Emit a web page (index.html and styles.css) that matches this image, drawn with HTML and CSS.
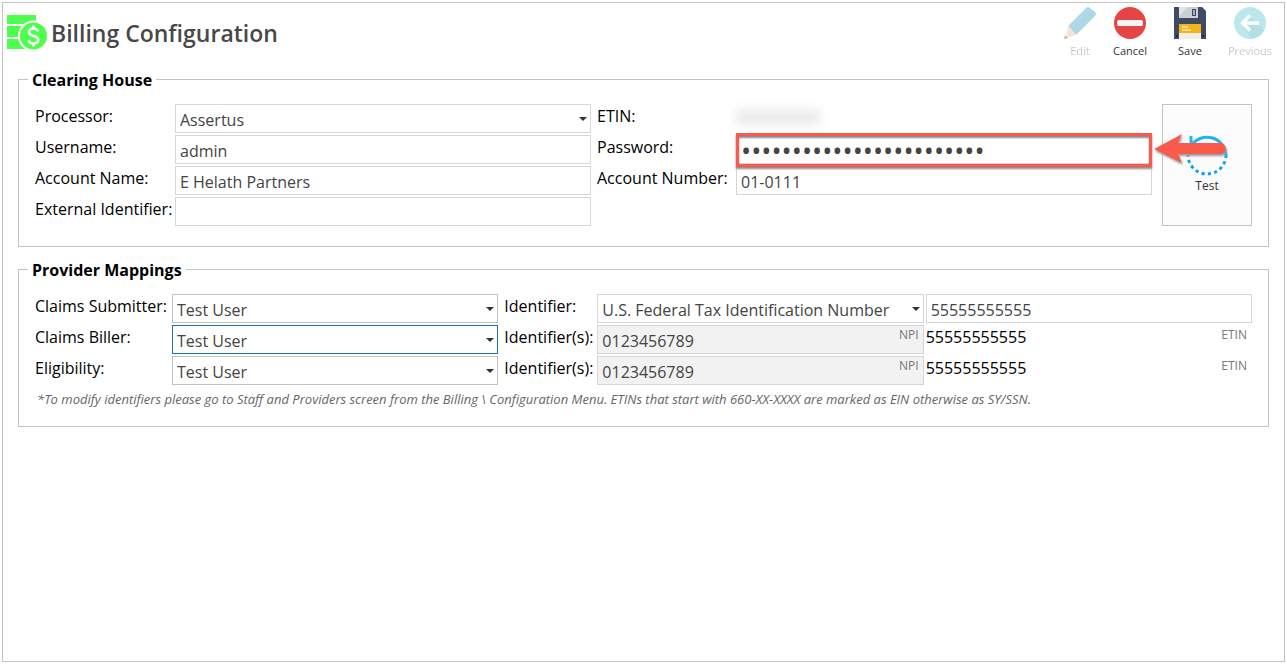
FILE: index.html
```html
<!DOCTYPE html>
<html lang="en">
  <head>
    <meta charset="UTF-8" />
    <meta name="viewport" content="width=device-width, initial-scale=1.0" />
    <title>Billing Configuration</title>
    <link rel="stylesheet" href="styles.css">
  </head>
  <body>
    <main class="window">
      <header class="header">
        <svg class="logo" width="41" height="36" viewBox="0 0 41 36">
          <g fill="#4cff4c">
            <rect x="0" y="0" width="29" height="9" />
            <rect x="0" y="11" width="29" height="11" />
            <rect x="0" y="24" width="29" height="10" />
          </g>
          <circle cx="26.5" cy="21" r="15.500" fill="#fff" />
          <circle cx="26.5" cy="21" r="13.500" fill="#4cff4c" />
          <path d="M31 16.5c-.6-2-2.300-3-4.500-3-2.700 0-4.500 1.400-4.500 3.600 0 5 9.300 2.600 9.300 7.700 0 2.300-2 3.700-4.800 3.700-2.500 0-4.400-1.200-4.900-3.300M26.500 10.500v3M26.500 28.500v3" fill="none" stroke="#fff" stroke-width="2.600" />
        </svg>
        <h1>Billing Configuration</h1>
        <div class="toolbar">
          <button class="tool tool-edit" type="button" disabled>
            <svg width="32" height="32" viewBox="0 0 32 32">
              <path d="M4 19 22 1q2-2 4 0l5 4q2 2 0 4L12 28z" fill="#3fa3c8" />
              <path d="M8 22 27 3l4 3q1 2-1 4L12 28z" fill="#2f8fb8" opacity=".4" />
              <path d="M4 19l2 3 2 1 1 2 3 3-10 3z" fill="#f3b3a0" />
              <path d="M1 28 0 32l4-1z" fill="#555" />
            </svg>
            Edit
          </button>
          <button class="tool" type="button">
            <svg width="32" height="32" viewBox="0 0 32 32">
              <circle cx="16" cy="16" r="16" fill="#e64545" />
              <rect x="3" y="13" width="26" height="6" rx="2" fill="#f4f4f4" />
            </svg>
            Cancel
          </button>
          <button class="tool" type="button">
            <svg width="32" height="32" viewBox="0 0 32 32">
              <path d="M0 0h28l4 4v28H0z" fill="#414a61" />
              <path d="M5 0h19v11H5z" fill="#ccd0d4" />
              <path d="M5 0h9l-9 9z" fill="#e2e5e8" />
              <rect x="18" y="2" width="4" height="7" fill="#414a61" />
              <rect x="19" y="3" width="2" height="5" fill="#aab0ba" />
              <rect x="5" y="17" width="22" height="9" fill="#efb71c" />
              <rect x="5" y="26" width="22" height="6" fill="#f1eee6" />
              <path d="M8 20h6M8 23h9" stroke="#fff" />
              <rect x="2" y="28" width="2" height="2" fill="#202636" />
              <rect x="28" y="28" width="2" height="2" fill="#202636" />
            </svg>
            Save
          </button>
          <button class="tool" type="button" disabled>
            <svg width="32" height="32" viewBox="0 0 32 32">
              <circle cx="16" cy="16" r="16" fill="#5cc8cf" />
              <path d="M14 8 30 23q-4 8-13 9l-9-15z" fill="#45b0b8" />
              <path d="M25 16H9M16 8.500 8.500 16l7.500 7.500" fill="none" stroke="#fff" stroke-width="3.400" />
            </svg>
            Previous
          </button>
        </div>
      </header>

      <form class="content">
        <!-- Clearing house credentials -->
        <fieldset>
          <legend>Clearing House</legend>
          <div class="house">
            <label for="processor">Processor:</label>
            <div class="field">
              <select id="processor" class="box soft"><option>Assertus</option></select>
            </div>
            <label class="second" for="etin">ETIN:</label>
            <output id="etin" class="redacted"><i></i></output>

            <label for="username">Username:</label>
            <input id="username" class="box soft" type="text" value="admin" />
            <label class="second" for="password">Password:</label>
            <div class="secret">
              <input id="password" class="box soft" type="password" value="abcdefghijklmnopqrstuvwx" />
            </div>

            <label for="account-name">Account Name:</label>
            <input id="account-name" class="box soft" type="text" value="E Helath Partners" />
            <label class="second" for="account-number">Account Number:</label>
            <input id="account-number" class="box soft" type="text" value="01-0111" />

            <label for="external">External Identifier:</label>
            <input id="external" class="box soft" type="text" />

            <div class="test">
              <button class="test-button" type="button">
                <svg width="42" height="42" viewBox="0 0 42 42" fill="none" stroke="#1eb4f5" stroke-width="3">
                  <path d="M5 12A19 19 0 0 1 40 21" />
                  <path d="M5 2v12h11" />
                  <path d="M40 21A19 19 0 0 1 2 21" stroke-dasharray="3.200 3.200" stroke="#14a0f0" />
                </svg>
                Test
              </button>
              <svg class="arrow" width="78" height="40" viewBox="0 0 78 40">
                <path d="M1 18 29 3 25 12H69a6 6 0 0 1 0 11H25l4 9z" fill="#fa5a4b" />
              </svg>
            </div>
          </div>
        </fieldset>

        <!-- Providers used on the claims -->
        <fieldset class="mappings">
          <legend>Provider Mappings</legend>
          <div class="providers">
            <label for="submitter">Claims Submitter:</label>
            <div class="field">
              <select id="submitter" class="box"><option>Test User</option></select>
            </div>
            <label class="second" for="id-type">Identifier:</label>
            <div class="field">
              <select id="id-type" class="box soft"><option>U.S. Federal Tax Identification Number</option></select>
            </div>
            <input class="box soft last" type="text" value="55555555555" aria-label="Tax identification number" />

            <label for="biller">Claims Biller:</label>
            <div class="field">
              <select id="biller" class="box active"><option>Test User</option></select>
            </div>
            <label class="second" for="biller-npi">Identifier(s):</label>
            <div class="tagged">
              <input id="biller-npi" class="box soft" type="text" value="0123456789" readonly />
              <span class="tag">NPI</span>
            </div>
            <div class="plain last"><span>55555555555</span><span class="kind">ETIN</span></div>

            <label for="eligibility">Eligibility:</label>
            <div class="field">
              <select id="eligibility" class="box"><option>Test User</option></select>
            </div>
            <label class="second" for="eligibility-npi">Identifier(s):</label>
            <div class="tagged">
              <input id="eligibility-npi" class="box soft" type="text" value="0123456789" readonly />
              <span class="tag">NPI</span>
            </div>
            <div class="plain last"><span>55555555555</span><span class="kind">ETIN</span></div>
          </div>
          <p class="note">*To modify identifiers please go to Staff and Providers screen from the Billing \ Configuration Menu. ETINs that start with 660-XX-XXXX are marked as EIN otherwise as SY/SSN.</p>
        </fieldset>
      </form>
    </main>
  </body>
</html>
```
FILE: styles.css
```css
* {
  box-sizing: border-box;
}

body {
  margin: 0;
  padding: 2px 2px 3px;
  min-height: 100vh;
  display: flex;
  background-color: #fff;
  color: #000;
  font-family: "Open Sans", "Noto Sans", sans-serif;
  font-size: 16px;
}

button,
input,
select {
  font-family: inherit;
  font-size: inherit;
}

.window {
  flex: 1;
  min-width: 0;
  border: 1px solid #c3c3c3;
}

/* Header with the title and the toolbar */
.header {
  display: flex;
  align-items: flex-start;
  height: 66px;
  padding: 4px 4px 0;
}

.logo {
  margin-top: 8px;
}

h1 {
  flex: 1;
  margin: 10px 0 0 3px;
  font-size: 23px;
  font-weight: 600;
  line-height: 32px;
  color: #484848;
}

.toolbar {
  display: flex;
}

.tool {
  display: flex;
  flex-direction: column;
  align-items: center;
  width: 60px;
  padding: 0;
  border: 0;
  background: none;
  color: #333;
  font-size: 11px;
  line-height: 24px;
}

.tool-edit {
  width: 40px;
}

.tool:disabled {
  color: #777;
  opacity: 0.4;
}

/* Grouped fields */
.content {
  padding: 0 15px;
}

fieldset {
  min-width: 0;
  margin: 0 0 12px;
  padding: 14px 16px 20px;
  border: 1px solid #c3c3c3;
}

.mappings {
  padding-bottom: 17px;
}

legend {
  margin-left: -7px;
  padding: 1px 4px 0;
  font-weight: 700;
  line-height: 20px;
}

.house,
.providers {
  display: grid;
  grid-auto-rows: 29px;
  row-gap: 2px;
}

.house {
  grid-template-columns: 140px 1fr 145px 1fr 100px;
}

.providers {
  grid-template-columns: 137px 1fr 99px 1fr 2px 1fr;
}

label {
  line-height: 24px;
  white-space: nowrap;
}

.second {
  padding-left: 6px;
}

.box {
  display: block;
  width: 100%;
  height: 29px;
  margin: 0;
  padding: 2px 4px 0;
  border: 1px solid #c3c3c3;
  border-radius: 0;
  outline: 0;
  background-color: #fff;
  color: #444;
  appearance: none;
}

.soft {
  border-color: #d6d6d6;
}

.active {
  border-color: #1a6fb5;
}

.box:read-only:not(select) {
  background-color: #f2f2f2;
}

.field,
.tagged,
.secret,
.test {
  position: relative;
}

.field::after {
  content: "";
  position: absolute;
  top: 13px;
  right: 4px;
  border: 4px solid transparent;
  border-top-color: #333;
  border-bottom: 0;
  pointer-events: none;
}

.redacted i {
  display: block;
  width: 84px;
  height: 16px;
  margin-top: 5px;
  background-color: #ececec;
  filter: blur(5px);
}

/* larger type gives larger dots */
.secret .box {
  font-size: 27px;
}

/* Red marker around the password */
.secret::after {
  content: "";
  position: absolute;
  inset: -2px 0 -3px;
  border: 3px solid #fa5a4b;
  box-shadow: 0 2px 2px #888, inset 0 2px 2px #888;
  pointer-events: none;
}

.test {
  grid-column: 5;
  grid-row: 1 / 5;
  margin-left: 10px;
}

.test-button {
  display: flex;
  flex-direction: column;
  align-items: center;
  justify-content: center;
  width: 100%;
  height: 100%;
  padding: 0;
  border: 1px solid #c3c3c3;
  background-color: #fcfcfc;
  color: #333;
  font-size: 12px;
  line-height: 20px;
}

.arrow {
  position: absolute;
  top: 27px;
  left: -9px;
  filter: drop-shadow(1px 2px 1px #999);
  pointer-events: none;
}

.tag {
  position: absolute;
  top: 0;
  right: 5px;
}

.tag,
.kind {
  color: #777;
  font-size: 12px;
  line-height: 20px;
}

.last {
  grid-column: 6;
}

.plain {
  display: flex;
  justify-content: space-between;
  padding-right: 5px;
  line-height: 24px;
}

.note {
  margin: 4px 2px 0;
  color: #666;
  font-size: 13px;
  font-style: italic;
  line-height: 20px;
}
```
